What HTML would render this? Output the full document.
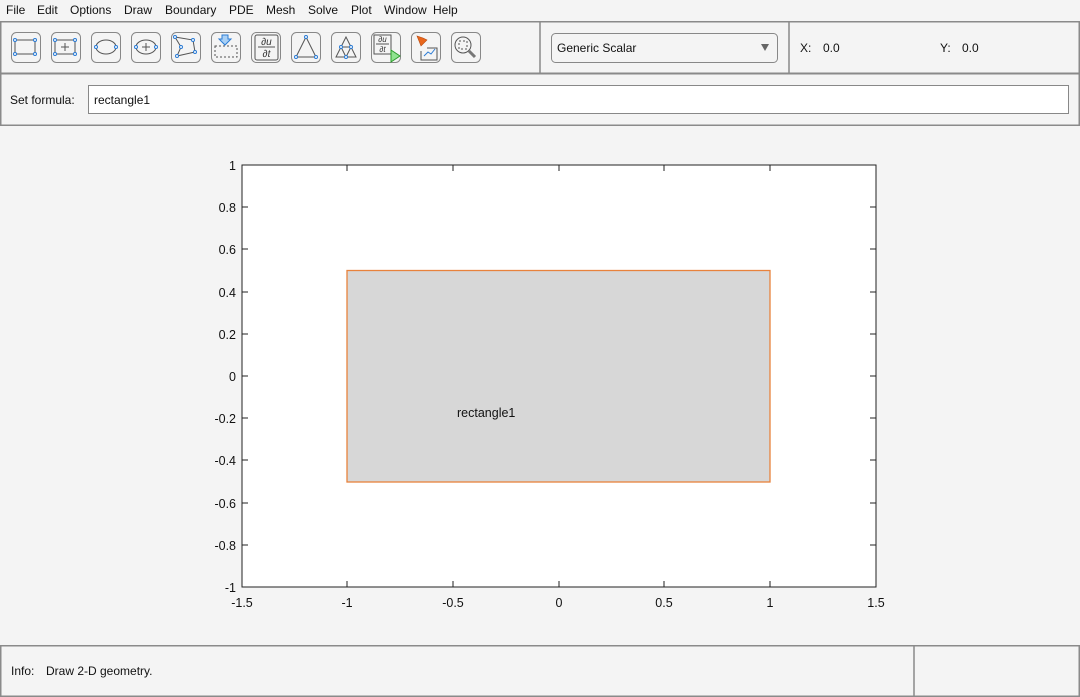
<!DOCTYPE html>
<html><head><style>
body{margin:0;width:1080px;height:697px;background:#f4f4f4;font-family:"Liberation Sans",sans-serif;overflow:hidden;position:relative}
.a{position:absolute}
</style></head><body>
<svg class="a" style="left:0;top:0" width="1080" height="697" font-family="Liberation Sans, sans-serif">
<!-- menu -->
<g font-size="12" fill="#111">
<text x="6" y="14">File</text><text x="37" y="14">Edit</text><text x="70" y="14">Options</text><text x="124" y="14">Draw</text><text x="165" y="14">Boundary</text><text x="229" y="14">PDE</text><text x="266" y="14">Mesh</text><text x="308" y="14">Solve</text><text x="351" y="14">Plot</text><text x="384" y="14">Window</text><text x="433" y="14">Help</text>
</g>
<!-- panels -->
<g fill="none" stroke="#8a8a8a" stroke-width="1.5">
<rect x="0.75" y="21.75" width="1078.5" height="51.5"/>
<line x1="540" y1="22" x2="540" y2="73"/><line x1="789" y1="22" x2="789" y2="73"/>
<rect x="0.75" y="73.75" width="1078.5" height="51.5"/>
<rect x="0.75" y="645.75" width="1078.5" height="50.5"/>
<line x1="914" y1="646" x2="914" y2="697"/>
</g>
<rect x="551.5" y="33.5" width="226" height="29" rx="4" fill="#f4f4f4" stroke="#888"/>
<text x="557" y="52" font-size="12" fill="#111">Generic Scalar</text>
<path d="M761 44h8l-4 7z" fill="#666"/>
<g font-size="12" fill="#111"><text x="800" y="52">X:</text><text x="823" y="52">0.0</text><text x="940" y="52">Y:</text><text x="962" y="52">0.0</text>
<text x="10" y="104">Set formula:</text></g>
<rect x="88.5" y="85.5" width="980" height="28" fill="#fff" stroke="#888"/>
<text x="94" y="104" font-size="12" fill="#111">rectangle1</text>
<text x="11" y="675" font-size="12" fill="#111">Info:</text><text x="46" y="675" font-size="12" fill="#111">Draw 2-D geometry.</text>
<!-- buttons -->
<g fill="#f4f4f4" stroke="#888" stroke-width="1">
<rect x="11.5" y="32.5" width="29" height="30" rx="5"/><rect x="51.5" y="32.5" width="29" height="30" rx="5"/><rect x="91.5" y="32.5" width="29" height="30" rx="5"/><rect x="131.5" y="32.5" width="29" height="30" rx="5"/><rect x="171.5" y="32.5" width="29" height="30" rx="5"/><rect x="211.5" y="32.5" width="29" height="30" rx="5"/><rect x="251.5" y="32.5" width="29" height="30" rx="5"/><rect x="291.5" y="32.5" width="29" height="30" rx="5"/><rect x="331.5" y="32.5" width="29" height="30" rx="5"/><rect x="371.5" y="32.5" width="29" height="30" rx="5"/><rect x="411.5" y="32.5" width="29" height="30" rx="5"/><rect x="451.5" y="32.5" width="29" height="30" rx="5"/>
</g>
<g fill="none" stroke="#555" stroke-width="1">
<rect x="15" y="40" width="20" height="14"/>
<rect x="55" y="40" width="20" height="14"/><path d="M65 43v8M61 47h8"/>
<ellipse cx="106" cy="47" rx="10" ry="7"/>
<ellipse cx="146" cy="47" rx="10" ry="7"/><path d="M146 43v8M142 47h8"/>
<path d="M175 37l18 3 2 12-18 4 4-9z"/>
<rect x="215" y="46" width="22" height="11" stroke-dasharray="2 2"/>
<rect x="255" y="35" width="23" height="25" rx="2"/><path d="M258 47h17"/>
<path d="M306 37l-10 20h20z"/>
<path d="M346 37l-10 20h20zM341 47h10l-5 10z"/>
<rect x="374" y="35" width="17" height="19"/><path d="M376 44h13"/>
<path d="M427 48h10v12h-16v-9" /><path d="M424 56l4-4 3 2 4-5" stroke="#2a7bd5"/>
<circle cx="463" cy="45" r="8"/><path d="M469 51l6 6" stroke-width="3" stroke="#777"/><rect x="459" y="41" width="8" height="8" stroke-dasharray="2 2"/>
</g>
<path d="M222 35h6v4h3l-6 6-6-6h3z" fill="#a9d0f5" stroke="#2a7bd5"/>
<path d="M391 50v12l9-6z" fill="#8fe38f" stroke="#2a9a2a"/>
<path d="M417 36l4 10 6-6-4-2z" fill="#e8661c" stroke="#b84a10" stroke-width=".6"/>
<g font-size="10" font-style="italic" fill="#333" text-anchor="middle"><text x="266.5" y="45">∂u</text><text x="266.5" y="57">∂t</text></g>
<g font-size="8" font-style="italic" fill="#333" text-anchor="middle"><text x="382.5" y="42">∂u</text><text x="382.5" y="52">∂t</text></g>
<g fill="#fff" stroke="#2a7bd5" stroke-width="1">
<circle cx="15" cy="40" r="1.5"/><circle cx="35" cy="40" r="1.5"/><circle cx="15" cy="54" r="1.5"/><circle cx="35" cy="54" r="1.5"/>
<circle cx="55" cy="40" r="1.5"/><circle cx="75" cy="40" r="1.5"/><circle cx="55" cy="54" r="1.5"/><circle cx="75" cy="54" r="1.5"/>
<circle cx="96" cy="47" r="1.5"/><circle cx="116" cy="47" r="1.5"/><circle cx="136" cy="47" r="1.5"/><circle cx="156" cy="47" r="1.5"/>
<circle cx="175" cy="37" r="1.5"/><circle cx="193" cy="40" r="1.5"/><circle cx="195" cy="52" r="1.5"/><circle cx="177" cy="56" r="1.5"/><circle cx="181" cy="47" r="1.5"/>
<circle cx="306" cy="37" r="1.5"/><circle cx="296" cy="57" r="1.5"/><circle cx="316" cy="57" r="1.5"/>
<circle cx="341" cy="47" r="1.5"/><circle cx="351" cy="47" r="1.5"/><circle cx="346" cy="57" r="1.5"/>
</g>
<!-- plot -->
<rect x="242" y="165" width="634" height="422" fill="#fff" stroke="#222" stroke-width="1"/>
<rect x="347" y="270.5" width="423" height="211.5" fill="#d7d7d7" stroke="#e8823c" stroke-width="1.3"/>
<text x="457" y="417" font-size="12.5" fill="#111">rectangle1</text>
<g stroke="#222" stroke-width="1">
<path d="M347 587v-6M453 587v-6M559 587v-6M664 587v-6M770 587v-6M347 165v6M453 165v6M559 165v6M664 165v6M770 165v6"/>
<path d="M242 207h6M242 249h6M242 292h6M242 334h6M242 376h6M242 418h6M242 460h6M242 503h6M242 545h6M876 207h-6M876 249h-6M876 292h-6M876 334h-6M876 376h-6M876 418h-6M876 460h-6M876 503h-6M876 545h-6"/>
</g>
<g font-size="12.5" fill="#111" text-anchor="middle">
<text x="242" y="607">-1.5</text><text x="347" y="607">-1</text><text x="453" y="607">-0.5</text><text x="559" y="607">0</text><text x="664" y="607">0.5</text><text x="770" y="607">1</text><text x="876" y="607">1.5</text>
</g>
<g font-size="12.5" fill="#111" text-anchor="end">
<text x="236" y="170">1</text><text x="236" y="212">0.8</text><text x="236" y="254">0.6</text><text x="236" y="297">0.4</text><text x="236" y="339">0.2</text><text x="236" y="381">0</text><text x="236" y="423">-0.2</text><text x="236" y="465">-0.4</text><text x="236" y="508">-0.6</text><text x="236" y="550">-0.8</text><text x="236" y="592">-1</text>
</g>
</svg>
</body></html>
